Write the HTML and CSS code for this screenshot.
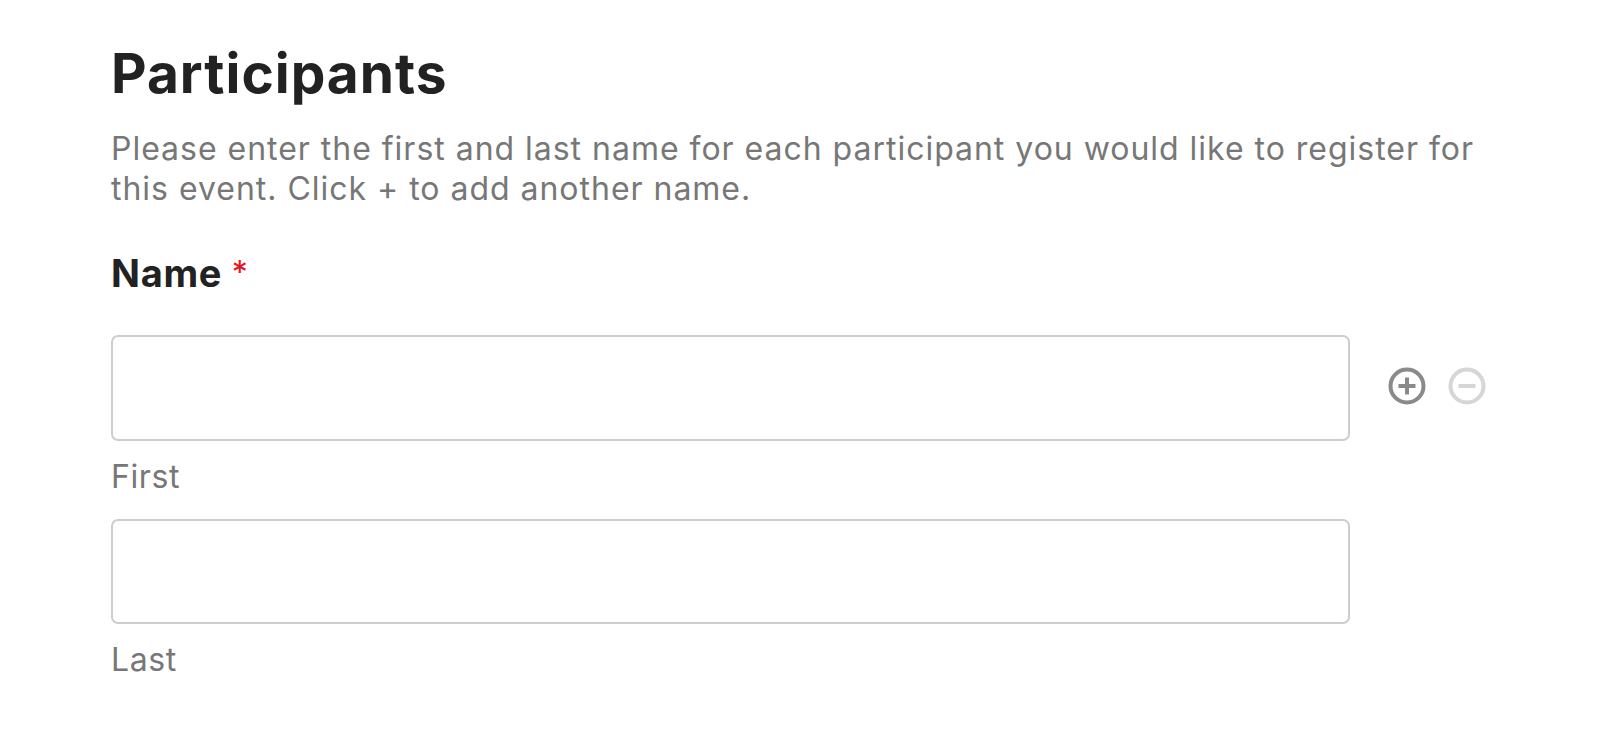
FILE: index.html
```html
<!DOCTYPE html>
<html lang="en">
<head>
    <meta charset="UTF-8">
    <meta name="viewport" content="width=device-width, initial-scale=1.0">
    <title>Participants</title>
    <link rel="stylesheet" href="styles.css">
</head>
<body>

    <div class="form">
        <!-- Section header -->
        <h1>Participants</h1>
        <p class="intro">Please enter the first and last name for each participant you would like to register for this event. Click + to add another name.</p>

        <!-- Name field -->
        <div class="field">
            <label class="field-label">Name <span class="required">*</span></label>

            <div class="name-row">
                <div class="name-inputs">
                    <input type="text" class="text-input">
                    <span class="sublabel">First</span>
                    <input type="text" class="text-input second">
                    <span class="sublabel">Last</span>
                </div>

                <div class="row-actions">
                    <svg class="row-btn add" width="40" height="40" viewBox="0 0 40 40">
                        <circle cx="20" cy="20" r="16.5" fill="none" stroke="currentColor" stroke-width="4"/>
                        <path d="M20 11.5v17M11.5 20h17" stroke="currentColor" stroke-width="4" fill="none"/>
                    </svg>
                    <svg class="row-btn remove" width="40" height="40" viewBox="0 0 40 40">
                        <circle cx="20" cy="20" r="16.5" fill="none" stroke="currentColor" stroke-width="4"/>
                        <path d="M11.5 20h17" stroke="currentColor" stroke-width="4" fill="none"/>
                    </svg>
                </div>
            </div>
        </div>
    </div>

</body>
</html>
```

FILE: styles.css
```css
* {
    margin: 0;
    padding: 0;
    box-sizing: border-box;
}

body {
    font-family: 'Inter', 'Noto Sans', sans-serif;
    background-color: #fff;
    color: #222;
}

.form {
    padding: 40px 0 0 111px;
}

h1 {
    font-size: 55px;
    line-height: 66px;
    font-weight: 700;
    letter-spacing: 1px;
    color: #222;
}

.intro {
    margin-top: 23px;
    width: 1400px;
    font-size: 32px;
    line-height: 40px;
    letter-spacing: 0.98px;
    color: #777;
}

.field {
    margin-top: 41px;
}

.field-label {
    display: block;
    font-size: 38px;
    line-height: 46px;
    font-weight: 700;
    letter-spacing: 0.7px;
    color: #222;
}

.required {
    color: #e8141c;
    font-weight: 400;
    font-size: 32px;
    vertical-align: top;
}

.name-row {
    display: flex;
    align-items: flex-start;
    margin-top: 39px;
}

.name-inputs {
    display: flex;
    flex-direction: column;
    width: 1239px;
}

.text-input {
    display: block;
    width: 100%;
    height: 106px;
    border: 2px solid #cdcdcd;
    border-radius: 7px;
    background: #fff;
}

.text-input.second {
    height: 105px;
    margin-top: 22px;
}

.sublabel {
    display: block;
    margin-top: 16px;
    font-size: 32px;
    line-height: 40px;
    letter-spacing: 0.6px;
    color: #777;
}

.row-actions {
    display: flex;
    gap: 20px;
    margin-left: 37px;
    margin-top: 31px;
}

.row-btn {
    display: block;
    cursor: pointer;
}

.row-btn.add {
    color: #8a8a8a;
}

.row-btn.remove {
    color: #d6d6d6;
}
```
